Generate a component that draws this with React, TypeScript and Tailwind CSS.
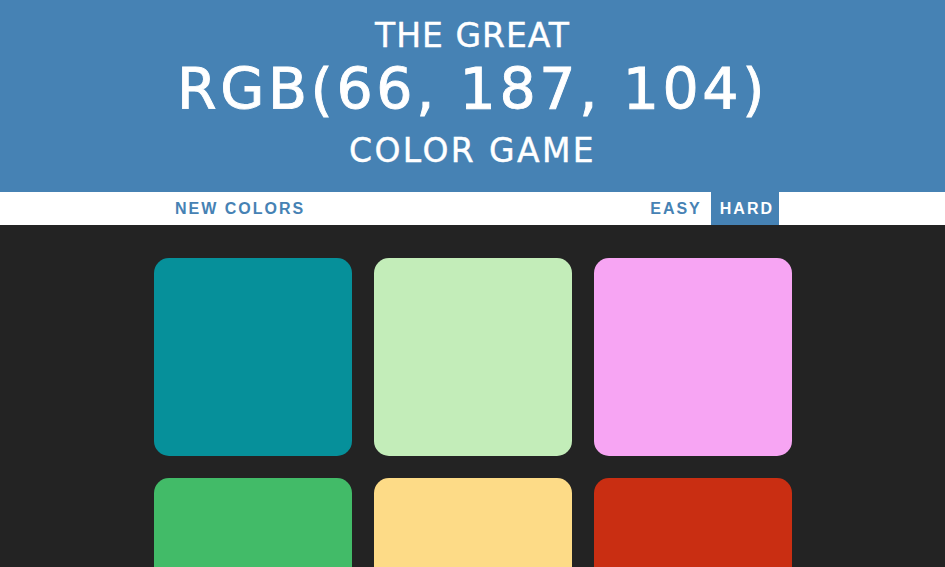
import React from 'react';

const squares = ['#06909a', '#c3edb9', '#f7a5f3', '#42bb68', '#fddb87', '#c92e12'];

export default function App() {
  return (
    <div className="h-screen overflow-hidden bg-[#232323]">
      <header className="h-[192px] bg-[#4682b4] text-center text-white font-['DejaVu_Sans',sans-serif] uppercase">
        <div className="pt-[18px] text-[33px] leading-[36px] tracking-[1px] [-webkit-text-stroke:0.4px_white]">The Great</div>
        <div className="mt-[4px] text-[57px] leading-[62px] tracking-[3.6px] [-webkit-text-stroke:0.9px_white]">RGB(66, 187, 104)</div>
        <div className="mt-[13px] text-[33px] leading-[36px] tracking-[2.4px] [-webkit-text-stroke:0.4px_white]">Color Game</div>
      </header>

      <nav className="flex h-[33px] justify-center bg-white font-['Liberation_Sans',Arial,sans-serif] text-[16px] font-bold uppercase leading-[33px] tracking-[2px] text-[#4682b4]">
        <button className="px-[9px] uppercase">New Colors</button>
        <span className="w-[327px]"></span>
        <button className="px-[9px] uppercase">Easy</button>
        <button className="pl-[9px] pr-[5px] bg-[#4682b4] text-white uppercase">Hard</button>
      </nav>

      <main className="mx-auto grid w-[638px] grid-cols-3 gap-[22px] pt-[33px]">
        {squares.map((c) => (
          <div key={c} className="h-[198px] rounded-[15px]" style={{ backgroundColor: c }} />
        ))}
      </main>
    </div>
  );
}
